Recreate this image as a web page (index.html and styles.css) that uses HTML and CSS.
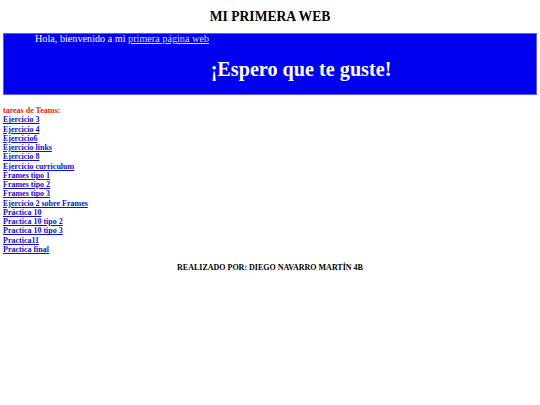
FILE: index.html
```html
<!DOCTYPE html>
<html lang="es">
<head>
<meta charset="utf-8">
<title>Mi primera web</title>
<link rel="stylesheet" href="styles.css">
</head>
<body>
<h1 class="title">MI PRIMERA WEB</h1>
<div class="banner">
  <p class="hello">Hola, bienvenido a mi <a href="#">primera página web</a></p>
  <h2 class="hope">¡Espero que te guste!</h2>
</div>
<div class="tasks">
  <p class="tasks-title">tareas de Teams:</p>
  <a href="#">Ejercicio 3</a>
  <a href="#">Ejercicio 4</a>
  <a href="#">Ejercicio6</a>
  <a href="#">Ejercicio links</a>
  <a href="#">Ejercicio 8</a>
  <a href="#">Ejercicio curriculum</a>
  <a href="#">Frames tipo 1</a>
  <a href="#">Frames tipo 2</a>
  <a href="#">Frames tipo 3</a>
  <a href="#">Ejercicio 2 sobre Frames</a>
  <a href="#">Práctica 10</a>
  <a href="#">Practica 10 tipo 2</a>
  <a href="#">Practica 10 tipo 3</a>
  <a href="#">Practica11</a>
  <a href="#">Practica final</a>
</div>
<p class="footer">REALIZADO POR: DIEGO NAVARRO MARTÍN 4B</p>
</body>
</html>
```
FILE: styles.css
```css
body {
  margin: 3px;
  font-family: "Liberation Serif", "Times New Roman", serif;
  background: #fff;
  color: #000;
}
.title {
  margin: 5px 0 0;
  height: 25px;
  font-size: 13.6px;
  line-height: 17px;
  text-align: center;
  font-weight: bold;
}
.banner {
  background: #0000f0;
  border: 1px solid #5b5bff;
  height: 60px;
  color: #fff;
}
.hello {
  margin: 0;
  padding-left: 31px;
  font-size: 10.2px;
  line-height: 10px;
}
.hello a {
  color: #dcdcff;
}
.hope {
  margin: 14px 0 0;
  padding-left: 62px;
  text-align: center;
  font-size: 20.2px;
  line-height: 23px;
  font-weight: bold;
}
.tasks {
  margin-top: 11px;
  display: flex;
  flex-direction: column;
  align-items: flex-start;
  font-size: 8px;
  line-height: 9.27px;
  font-weight: bold;
}
.tasks-title {
  margin: 0;
  color: #e21b1b;
}
.tasks a {
  color: #1010c8;
}
.footer {
  margin: 9px 0 0;
  text-align: center;
  font-size: 8px;
  line-height: 9px;
  font-weight: bold;
}
```
